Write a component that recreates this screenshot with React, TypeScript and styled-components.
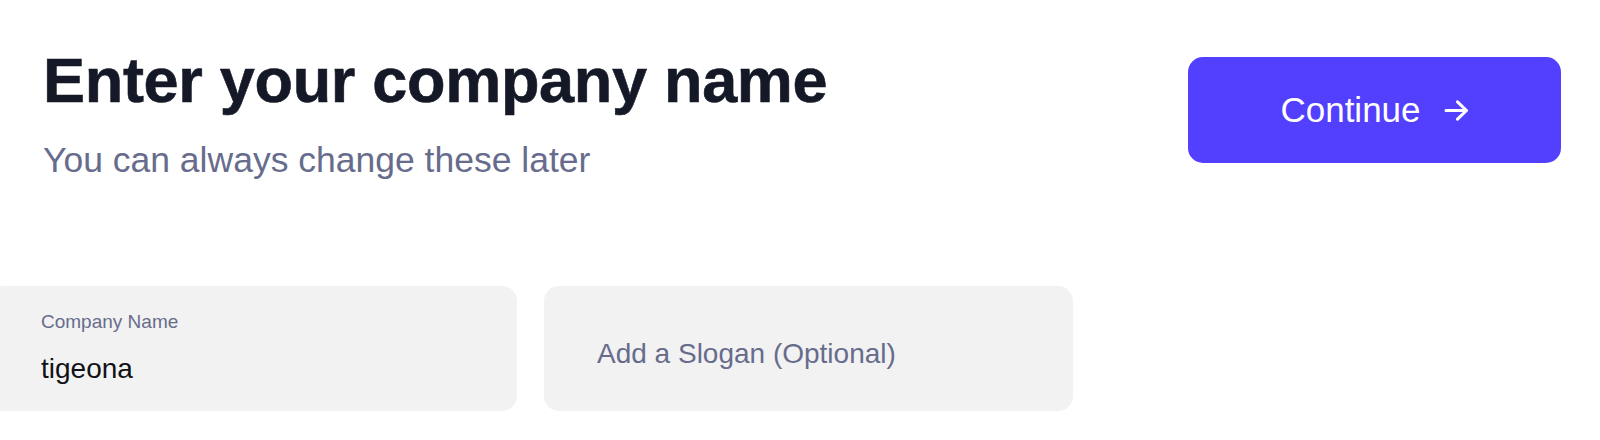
import React from 'react';
import styled, { createGlobalStyle } from 'styled-components';

const GlobalStyle = createGlobalStyle`
  html, body {
    margin: 0;
    padding: 0;
    background: #fff;
  }
  body {
    font-family: 'Liberation Sans', Arial, sans-serif;
    -webkit-font-smoothing: antialiased;
  }
`;

const Page = styled.div`
  width: 1600px;
  height: 440px;
  box-sizing: border-box;
  padding: 49px 39px 0 43px;
  overflow: hidden;
`;

const Header = styled.div`
  display: flex;
  justify-content: space-between;
  align-items: flex-start;
`;

const TitleBlock = styled.div`
  display: flex;
  flex-direction: column;
`;

const Title = styled.h1`
  margin: 0;
  font-size: 63px;
  line-height: 63px;
  font-weight: 700;
  color: #151826;
  letter-spacing: -0.3px;
  -webkit-text-stroke: 0.6px #151826;
`;

const Subtitle = styled.p`
  margin: 31px 0 0 0;
  font-size: 35.5px;
  line-height: 35px;
  font-weight: 400;
  color: #686c8c;
`;

const ContinueButton = styled.button`
  width: 373px;
  height: 106px;
  margin-top: 8px;
  padding: 0;
  border: none;
  border-radius: 15px;
  background: #5340ff;
  color: #fff;
  font-family: 'Liberation Sans', Arial, sans-serif;
  font-size: 35px;
  font-weight: 400;
  display: flex;
  align-items: center;
  justify-content: center;
  gap: 23px;
  cursor: pointer;
`;

const Fields = styled.div`
  display: flex;
  gap: 27px;
  margin: 108px 0 0 -55px;
`;

const Field = styled.div<{ $centered?: boolean }>`
  width: 529px;
  height: 125px;
  box-sizing: border-box;
  padding: ${(p) => (p.$centered ? '10px 53px 0' : '26px 53px 0')};
  border-radius: 15px;
  background: #f2f2f2;
  display: flex;
  flex-direction: column;
  justify-content: ${(p) => (p.$centered ? 'center' : 'flex-start')};
`;

const FieldLabel = styled.span`
  font-size: 19px;
  line-height: 19px;
  color: #686c8c;
  margin-bottom: 24px;
`;

const FieldValue = styled.span<{ $placeholder?: boolean }>`
  font-size: 28px;
  line-height: 28px;
  color: ${(p) => (p.$placeholder ? '#686c8c' : '#111218')};
`;

const Arrow = () => (
  <svg width="25" height="21" viewBox="0 0 25 21" fill="none">
    <path
      d="M2 10.5H22.5M13.5 1.8L22.5 10.5L13.5 19.2"
      stroke="#fff"
      strokeWidth="3"
      strokeLinecap="round"
      strokeLinejoin="round"
    />
  </svg>
);

const App: React.FC = () => {
  return (
    <>
      <GlobalStyle />
      <Page>
        <Header>
          <TitleBlock>
            <Title>Enter your company name</Title>
            <Subtitle>You can always change these later</Subtitle>
          </TitleBlock>
          <ContinueButton>
            Continue
            <Arrow />
          </ContinueButton>
        </Header>
        <Fields>
          <Field>
            <FieldLabel>Company Name</FieldLabel>
            <FieldValue>tigeona</FieldValue>
          </Field>
          <Field $centered>
            <FieldValue $placeholder>Add a Slogan (Optional)</FieldValue>
          </Field>
        </Fields>
      </Page>
    </>
  );
};

export default App;
